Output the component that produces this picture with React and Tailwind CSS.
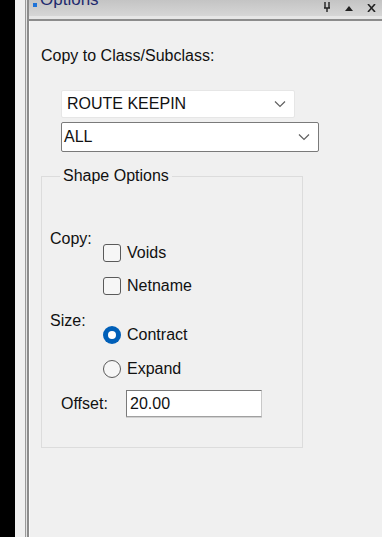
import React from "react";

const Chevron = () => (
    <svg width="12" height="8" viewBox="0 0 12 8" className="shrink-0">
        <path d="M1 1.5 L6 6.5 L11 1.5" fill="none" stroke="#606060" strokeWidth="1.2" />
    </svg>
);

const CheckRow = ({ label }) => (
    <div className="flex items-center h-[18px] gap-[6px]">
        <div className="w-[18px] h-[18px] rounded-[3px] border border-[#5a5a5a] bg-[#f6f6f6]" />
        <span>{label}</span>
    </div>
);

const RadioRow = ({ label, checked }) => (
    <div className="flex items-center h-[18px] gap-[6px]">
        {checked ? (
            <div className="w-[18px] h-[18px] rounded-full bg-[#005fb8] flex items-center justify-center">
                <div className="w-[8px] h-[8px] rounded-full bg-white" />
            </div>
        ) : (
            <div className="w-[18px] h-[18px] rounded-full border border-[#5a5a5a] bg-[#f6f6f6]" />
        )}
        <span>{label}</span>
    </div>
);

const App = () => {
    return (
        <div
            className="flex w-[382px] h-[537px] bg-[#f0f0f0] overflow-hidden text-[16px] text-[#111]"
            style={{ fontFamily: '"Liberation Sans", Arial, sans-serif' }}
        >
            <div className="w-[15px] bg-black" />
            <div className="w-[10px] bg-[#f0f0f0]" />
            <div className="w-px bg-[#9a9a9a]" />
            <div className="w-px bg-[#e4e4e4]" />
            <div className="w-[2px] bg-[#8c8c8c]" />
            <div className="flex-1 flex flex-col">
                {/* title bar */}
                <div className="h-[16px] bg-gradient-to-b from-[#c4c4c4] to-[#d6d6d6] flex items-end overflow-hidden pl-[4px] pr-[6px]">
                    <div className="w-[4px] h-[4px] bg-[#1e73d8] mb-[9px] mr-[3px]" />
                    <span className="text-[17px] leading-[20px] text-[#1e2a6e] mb-[6px]">Options</span>
                    <div className="flex-1" />
                    <div className="flex items-end gap-[14px] mb-[4px]">
                        <svg width="8" height="10" viewBox="0 0 8 10">
                            <path d="M2 0 V6 H6 V0 M1 6 H7 M4 6 V10" fill="none" stroke="#222" strokeWidth="1.4" />
                        </svg>
                        <svg width="8" height="6" viewBox="0 0 8 6">
                            <path d="M0 5 L4 0 L8 5 Z" fill="#222" />
                        </svg>
                        <svg width="9" height="8" viewBox="0 0 9 8">
                            <path d="M1 0 L8 8 M8 0 L1 8" fill="none" stroke="#222" strokeWidth="1.6" />
                        </svg>
                    </div>
                </div>
                <div className="h-[3px] bg-[#e6e6e6]" />
                <div className="h-[2px] bg-[#8c8c8c]" />
                {/* content */}
                <div className="flex-1 border-l border-[#fafafa] pl-[11px]">
                    <div className="mt-[25px] leading-[20px]">Copy to Class/Subclass:</div>
                    <div className="ml-[20px] mt-[24px] flex flex-col gap-[4px]">
                        <div className="w-[234px] h-[28px] bg-white border border-[#e6e6e6] rounded-[2px] flex items-center pl-[5px] pr-[8px]">
                            <span className="flex-1">ROUTE KEEPIN</span>
                            <Chevron />
                        </div>
                        <div className="w-[258px] h-[30px] bg-white border border-[#7a7a7a] rounded-[2px] flex items-center pl-[2px] pr-[8px]">
                            <span className="flex-1">ALL</span>
                            <Chevron />
                        </div>
                    </div>
                    <fieldset className="mt-[14px] w-[262px] h-[282px] border border-[#dcdcdc] pl-[8px]">
                        <legend className="ml-[10px] px-[3px] leading-[20px]">Shape Options</legend>
                        <div className="mt-[43px] flex items-start">
                            <span className="w-[53px] leading-[20px]">Copy:</span>
                            <div className="mt-[15px] flex flex-col gap-[15px]">
                                <CheckRow label="Voids" />
                                <CheckRow label="Netname" />
                            </div>
                        </div>
                        <div className="mt-[16px] flex items-start">
                            <span className="w-[53px] leading-[20px]">Size:</span>
                            <div className="mt-[15px] flex flex-col gap-[16px]">
                                <RadioRow label="Contract" checked />
                                <RadioRow label="Expand" />
                            </div>
                        </div>
                        <div className="mt-[12px] flex items-center">
                            <span className="w-[76px] pl-[11px]">Offset:</span>
                            <div className="w-[136px] h-[27px] bg-white border border-[#7a7a7a] border-b-[#a0a0a0] border-r-[#c8c8c8] shadow-[0_1px_0_#d0d0d0] flex items-center pl-[3px]">
                                20.00
                            </div>
                        </div>
                    </fieldset>
                </div>
            </div>
        </div>
    );
};

export default App;
